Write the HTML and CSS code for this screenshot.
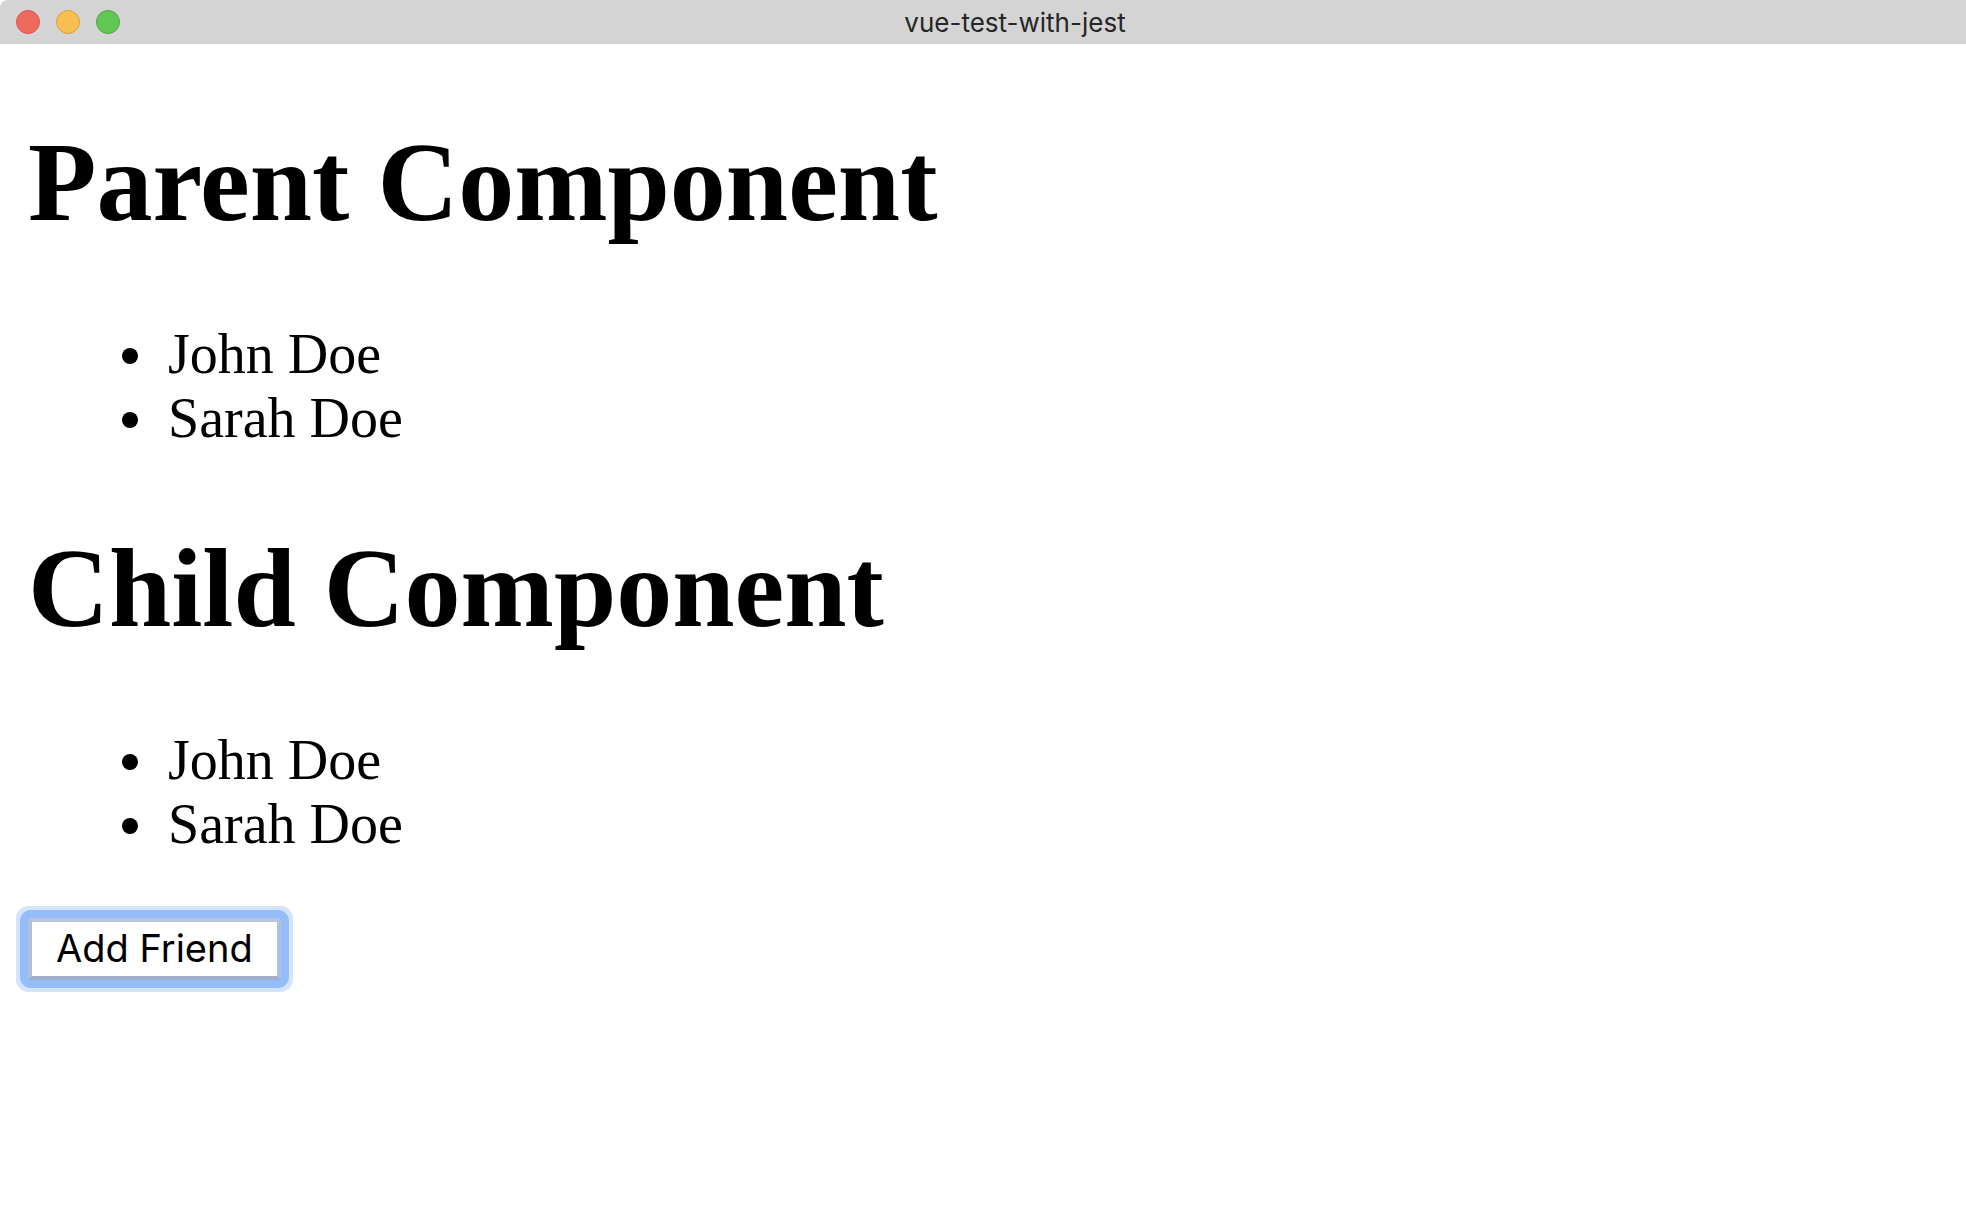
FILE: index.html
```html
<!DOCTYPE html>
<html lang="en">
<head>
<meta charset="utf-8">
<title>vue-test-with-jest</title>
<link rel="stylesheet" href="styles.css">
</head>
<body>
<header class="titlebar">
  <div class="controls">
    <button class="dot close" aria-label="Close"></button>
    <button class="dot minimize" aria-label="Minimize"></button>
    <button class="dot zoom" aria-label="Zoom"></button>
  </div>
  <div class="title">vue-test-with-jest</div>
</header>
<main class="page">
  <section>
    <h1 class="heading">Parent Component</h1>
    <ul class="friends"><li>John Doe</li><li>Sarah Doe</li></ul>
  </section>
  <section>
    <h1 class="heading">Child Component</h1>
    <ul class="friends"><li>John Doe</li><li>Sarah Doe</li></ul>
    <button class="add">Add Friend</button>
  </section>
</main>
</body>
</html>
```
FILE: styles.css
```css
body {
  margin: 0;
  min-height: 100vh;
  background: #fff;
  color: #000;
  font-family: "Liberation Serif", "Times New Roman", serif;
}
.titlebar {
  display: grid;
  grid-template-columns: 64px 1fr;
  align-items: center;
  height: 44px;
  border-top-left-radius: 8px;
  background: #d4d4d4;
}
.controls {
  display: flex;
  gap: 16px;
  padding-left: 16px;
}
.dot {
  flex: none;
  box-sizing: border-box;
  width: 24px;
  height: 24px;
  padding: 0;
  border: 1px solid #e0524a;
  border-radius: 50%;
  background: #ee6a5f;
}
.minimize { border-color: #dba03c; background: #f6bf50; }
.zoom { border-color: #4fa73c; background: #62c655; }
.title {
  text-align: center;
  font: 26px Inter, sans-serif;
  color: #262626;
}
.page { padding: 0 28px; }
.heading {
  margin: 0;
  padding: 74px 0 76px;
  font-size: 112px;
  line-height: 128px;
}
.friends {
  margin: 0;
  padding-left: 94px;
  list-style: none;
  font-size: 56px;
  line-height: 64px;
}
.friends li {
  display: flex;
  align-items: center;
  gap: 30px;
}
.friends li::before {
  content: "";
  width: 16px;
  height: 16px;
  margin-top: 4px;
  border-radius: 50%;
  background: #000;
}
.add {
  display: block;
  margin-top: 62px;
  padding: 3px 24px 5px;
  border: 4px solid;
  border-color: #b7c6de #b0bfdb #a0afcb;
  border-radius: 4px;
  background: #fff;
  color: #000;
  font: 38px/46px Inter, sans-serif;
  outline: none;
  box-shadow: 0 0 0 8px #94bdf9, 0 0 0 12px #d4e4fd;
}
```
